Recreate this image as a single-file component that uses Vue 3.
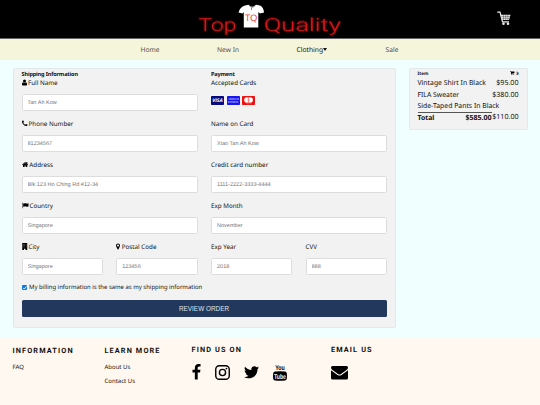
<script setup>
const icons = {
  user: { w: 1280, d: 'M1280 1399q0 109-62.500 187t-150.500 78h-854q-88 0-150.500-78t-62.500-187q0-85 8.500-160.500t31.500-152 58.500-131 94-89 134.500-34.500q131 128 313 128t313-128q76 0 134.500 34.500t94 89 58.500 131 31.500 152 8.500 160.500zm-256-887q0 159-112.500 271.500t-271.500 112.500-271.500-112.500-112.500-271.500 112.500-271.500 271.500-112.500 271.500 112.500 112.500 271.500z' },
  phone: { w: 1408, d: 'M1408 1240q0 27-10 70.500t-21 68.500q-21 50-122 106-94 51-186 51-27 0-53-3.500t-57.500-12.500-47-14.500-55.500-20.500-49-18q-98-35-175-83-127-79-264-216t-216-264q-48-77-83-175-3-9-18-49t-20.500-55.500-14.500-47-12.500-57.500-3.500-53q0-92 51-186 56-101 106-122 25-11 68.500-21t70.500-10q14 0 21 3 18 6 53 76 11 19 30 54t35 63.500 31 53.500q3 4 17.500 25t21.500 35.500 7 28.500q0 20-28.500 50t-62 55-62 53-28.500 46q0 9 5 22.500t8.500 20.500 14 24 11.500 19q76 137 174 235t235 174q2 1 19 11.500t24 14 20.500 8.500 22.500 5q18 0 46-28.500t53-62 55-62 50-28.500q14 0 28.500 7t35.500 21.500 25 17.500q25 15 53.500 31t63.500 35 54 30q70 35 76 53 3 7 3 21z' },
  house: { w: 1664, d: 'M1408 992v480q0 26-19 45t-45 19h-384v-384h-256v384h-384q-26 0-45-19t-19-45v-480l576-475zm223-69l-62 74q-8 9-21 11h-3q-13 0-21-7l-692-577-692 577q-12 8-24 7-13-2-21-11l-62-74q-8-10-7-23.500t11-21.500l719-599q32-26 76-26t76 26l244 204v-195q0-14 9-23t23-9h192q14 0 23 9t9 23v408l219 182q10 8 11 21.500t-7 23.500z' },
  flag: { w: 1792, d: 'M320 256q0 72-64 110v1266q0 13-9.500 22.500t-22.500 9.500h-64q-13 0-22.500-9.500t-9.500-22.500v-1266q-64-38-64-110 0-53 37.500-90.500t90.500-37.500 90.500 37.500 37.500 90.500zm1472 64v763q0 25-12.500 38.500t-39.500 27.500q-215 116-369 116-61 0-123.500-22t-108.500-48-115.500-48-142.500-22q-192 0-464 146-17 9-33 9-26 0-45-19t-19-45v-742q0-32 31-55 21-14 79-43 236-120 421-120 107 0 200 29t219 88q38 19 88 19 54 0 117.500-21t110-47 88-47 54.500-21q26 0 45 19t19 45z' },
  building: { w: 1408, d: 'M64 0H1344V1792H896V1500H512V1792H64ZM300 256V380H420V256ZM644 256V380H764V256ZM988 256V380H1108V256ZM300 600V724H420V600ZM644 600V724H764V600ZM988 600V724H1108V600ZM300 950V1074H420V950ZM644 950V1074H764V950ZM988 950V1074H1108V950Z' },
  pin: { w: 1024, d: 'M768 640q0-106-75-181t-181-75-181 75-75 181 75 181 181 75 181-75 75-181zm256 0q0 109-33 179l-364 774q-16 33-47.500 52t-67.500 19-67.500-19-46.500-52l-365-774q-33-70-33-179 0-212 150-362t362-150 362 150 150 362z' }
}
const rows = [
  [{ label: 'Full Name', icon: 'user', ph: 'Tan Ah Kow' }],
  [{ label: 'Phone Number', icon: 'phone', ph: '81234567' }],
  [{ label: 'Address', icon: 'house', ph: 'Blk 123 Ho Ching Rd #12-34' }],
  [{ label: 'Country', icon: 'flag', ph: 'Singapore' }],
  [{ label: 'City', icon: 'building', ph: 'Singapore' }, { label: 'Postal Code', icon: 'pin', ph: '123456' }]
]
const payRows = [
  [{ label: 'Name on Card', ph: 'Xiao Tan Ah Kow' }],
  [{ label: 'Credit card number', ph: '1111-2222-3333-4444' }],
  [{ label: 'Exp Month', ph: 'November' }],
  [{ label: 'Exp Year', ph: '2018' }, { label: 'CVV', ph: '888' }]
]
</script>

<template>
  <div class="page">
    <header class="top">
      <svg class="brand" viewBox="0 0 150 38" width="150" height="38">
        <g class="neon">
          <text x="2.500" y="30.500" textLength="38" lengthAdjust="spacingAndGlyphs">Top</text>
          <text x="68" y="30.500" textLength="77" lengthAdjust="spacingAndGlyphs">Quality</text>
        </g>
        <path class="shirt" d="M49 5.500 52.500 4.800Q56 8.500 60 4.800L64 5.500Q67.500 7 68 12.500L64 13.600 62.300 12V27.500H47.800V12L46.500 13.600 42.500 12.500Q44 7 49 5.500Z" />
        <path d="M53 5Q56 9.500 59.500 5M55.500 7.500V10" fill="none" stroke="#555" stroke-width=".7" />
        <text class="tq" x="49" y="20.600" textLength="12.500" lengthAdjust="spacingAndGlyphs">TQ</text>
      </svg>
      <svg class="cart" viewBox="0 0 14 15" width="14" height="15">
        <path d="M.3 1.200H3L5.500 10.800H12" fill="none" stroke="#eee" stroke-width="1.200" />
        <path d="M3.500 3.700H13.600L12 9H5Z" fill="#e9e9e9" />
        <path d="M4.300 5.500H13M4.700 7.300H12.500M6.500 4V9M8.700 4V9M10.900 4V9" stroke="#333" stroke-width=".4" />
        <circle cx="6.500" cy="12.700" r="1.300" fill="#eee" /><circle cx="11" cy="12.700" r="1.300" fill="#eee" />
      </svg>
    </header>
    <nav class="nav">
      <a class="home">Home</a><a class="new">New In</a><a class="clothing">Clothing<i class="caret"></i></a><a class="sale">Sale</a>
    </nav>
    <main class="main">
      <form class="card checkout">
        <div class="columns">
          <section class="col">
            <h3>Shipping Information</h3>
            <div v-for="(row, i) in rows" :key="i" class="row">
              <div v-for="f in row" :key="f.label" class="field">
                <label><svg :viewBox="`0 0 ${icons[f.icon].w} 1792`" class="ico" :class="f.icon"><path :d="icons[f.icon].d" fill-rule="evenodd" /></svg>{{ f.label }}</label>
                <input type="text" :placeholder="f.ph">
              </div>
            </div>
          </section>
          <section class="col pay">
            <h3>Payment</h3>
            <div class="accepted">
              <label>Accepted Cards</label>
              <div class="brands">
                <svg viewBox="0 0 13 9" width="13" height="9"><rect width="13" height="9" rx=".8" fill="#0a0a80" /><text x="1.200" y="6.400" textLength="10.600" lengthAdjust="spacingAndGlyphs" class="visa">VISA</text></svg>
                <svg viewBox="0 0 13 9" width="13" height="9"><rect width="13" height="9" rx=".8" fill="#1a16ef" /><g class="amex"><text x="1.500" y="4.400" textLength="10.500" lengthAdjust="spacingAndGlyphs">AMERICAN</text><text x=".8" y="7.300" textLength="10.500" lengthAdjust="spacingAndGlyphs">EXPRESS</text></g></svg>
                <svg viewBox="0 0 13 9" width="13" height="9"><rect width="13" height="9" rx=".8" fill="#ee1111" /><circle cx="4.900" cy="4" r="2.700" fill="#fff" /><circle cx="8.200" cy="4" r="2.700" fill="#fff" /><path d="M6.550 1.900Q8.200 4 6.550 6.100 4.900 4 6.550 1.900Z" fill="#f99" stroke="#e33" stroke-width=".3" /><path d="M4 7.700H9.500" stroke="#f77" stroke-width=".5" /></svg>
              </div>
            </div>
            <div v-for="(row, i) in payRows" :key="i" class="row">
              <div v-for="f in row" :key="f.label" class="field">
                <label>{{ f.label }}</label>
                <input type="text" :placeholder="f.ph">
              </div>
            </div>
          </section>
        </div>
        <label class="same"><span class="check"><svg viewBox="0 0 6 6"><path d="M1.200 3.100 2.500 4.400 4.900 1.500" fill="none" stroke="#fff" stroke-width="1" /></svg></span>My billing information is the same as my shipping information</label>
        <button type="button">REVIEW ORDER</button>
      </form>
      <aside class="card basket">
        <div class="head"><b>Item</b><b><svg viewBox="0 0 12 11"><path d="M0 0H2.600L3 1.500H12V6.500L4.300 7.300V8H11V9H3L2 1.200H0Z" /><circle cx="4" cy="10" r="1" /><circle cx="10" cy="10" r="1" /></svg>3</b></div>
        <div class="line"><span>Vintage Shirt In Black</span><span class="price">$95.00</span></div>
        <div class="line"><span>FILA Sweater</span><span class="price">$380.00</span></div>
        <div class="line"><span>Side-Taped Pants In Black</span></div>
        <div class="totals"><p><b>Total</b><b class="sum">$585.00</b></p><span class="price">$110.00</span></div>
      </aside>
    </main>
    <footer class="foot">
      <section class="info"><h4>INFORMATION</h4><a>FAQ</a></section>
      <section class="learn"><h4>LEARN MORE</h4><a>About Us</a><a>Contact Us</a></section>
      <section class="find">
        <h4>FIND US ON</h4>
        <div class="social">
          <svg class="fb" viewBox="95 0 864 1664"><path d="M959 12v264h-157q-86 0-116 36t-30 108v189h293l-39 296h-254v759h-306v-759h-255v-296h255v-218q0-186 104-288.500t277-102.500q147 0 228 12z" /></svg>
          <svg class="ig" viewBox="0 0 16 16"><rect x=".8" y=".8" width="14.400" height="14.400" rx="3.800" fill="none" stroke="#000" stroke-width="1.500" /><circle cx="8" cy="8" r="3.300" fill="none" stroke="#000" stroke-width="1.500" /><circle cx="12.200" cy="3.800" r="1" /></svg>
          <svg class="tw" viewBox="44 256 1576 1280"><path d="M1620 408q-67 98-162 167 1 14 1 42 0 130-38 259.500t-115.500 248.500-184.500 210.500-258 146-323 54.500q-271 0-496-145 35 4 78 4 225 0 401-138-105-2-188-64.500t-114-159.500q33 5 61 5 43 0 85-11-112-23-185.500-111.500t-73.500-205.500v-4q68 38 146 41-66-44-105-115t-39-154q0-88 44-163 121 149 294.500 238.500t371.500 99.500q-8-38-8-74 0-134 94.500-228.500t228.500-94.500q140 0 236 102 109-21 205-78-37 115-142 178 93-10 186-50z" /></svg>
          <svg class="yt" viewBox="0 0 14 17"><path d="M2 7.600Q7 7.100 12 7.600 13.500 7.800 13.800 9.500 14.200 12 13.800 14.700 13.500 16.200 12 16.500 7 17 2 16.500.5 16.200.2 14.700-.2 12 .2 9.500.5 7.800 2 7.600Z" /><text x="2.200" y="6.100" textLength="9.600" lengthAdjust="spacingAndGlyphs">You</text><text x="1" y="14.900" textLength="12" lengthAdjust="spacingAndGlyphs" fill="#fff8f0">Tube</text></svg>
        </div>
      </section>
      <section class="mail">
        <h4>EMAIL US</h4>
        <svg viewBox="0 0 17 14"><path d="M1.500 0H15.500Q17 0 17 1.500 17 3 15.200 4.300L10 8Q8.500 9 7 8L1.800 4.300Q0 3 0 1.500 0 0 1.500 0ZM0 4.300 6.500 8.900Q8.500 10.200 10.500 8.900L17 4.300V12Q17 13.500 15.500 13.500H1.500Q0 13.500 0 12Z" /></svg>
      </section>
    </footer>
  </div>
</template>

<style>
body { margin: 0; background: #fff8f0; overflow: hidden; }
</style>

<style scoped>
* { box-sizing: border-box; }
svg { overflow: visible; flex: none; }
.page { width: 540px; height: 405px; background: #f0ffff; font: 6.7px/9px "Noto Sans", "Open Sans", sans-serif; color: #111; display: flex; flex-direction: column; text-rendering: geometricPrecision; }
h3, h4, p { margin: 0; }
.top { height: 38.500px; background: #000; display: flex; flex: none; align-items: flex-start; padding-left: 196px; border-bottom: .5px solid #666; }
.neon text { font: 300 18px Roboto, sans-serif; fill: #d81a1e; }
.neon { filter: drop-shadow(0 0 1px #c00); }
.shirt { fill: #fff; }
.tq { font: 9px "Noto Sans", sans-serif; fill: #e44; }
.cart { margin: 11px 0 0 151px; }
.nav { height: 21.500px; flex: none; background: #f5f5dc; display: flex; align-items: center; padding-left: 140.500px; color: #574c3c; }
.nav a { white-space: nowrap; line-height: 9px; }
.home { width: 76.500px; } .new { width: 79.500px; } .clothing { width: 89px; color: #111; }
.caret { display: inline-block; border: 2.300px solid transparent; border-top: 3px solid #111; border-bottom: 0; vertical-align: .4px; }
.main { height: 276.500px; flex: none; padding: 8px 12.500px 0; display: flex; gap: 13px; align-items: flex-start; }
.card { background: #f2f2f2; border: 1px solid #e3e8e8; border-radius: 1.500px; }
.checkout { width: 383px; height: 260px; padding: 1px 8px 0; }
.columns { display: grid; grid-template-columns: 176px 175.500px; gap: 13.500px; }
h3 { font-size: 5.600px; line-height: 8px; font-weight: 700; letter-spacing: -.17px; white-space: nowrap; }
.row { display: flex; gap: 13.500px; height: 41px; }
.field { flex: 1; min-width: 0; }
label { display: flex; align-items: center; height: 9px; white-space: nowrap; font-size: 6.250px; }
.ico { height: 7px; margin-right: 1.500px; }
.user { width: 5px; } .phone { width: 5.500px; } .house { width: 6.300px; } .flag { width: 6.500px; } .building { width: 5.500px; } .pin { width: 4px; }
input { display: block; width: 100%; height: 17px; margin: 7px 0 0; padding: 0 5px; border: 1px solid #ddd; border-radius: 1.500px; background: #fff; font: 5.550px "Liberation Sans", sans-serif; text-rendering: geometricPrecision; }
input::placeholder { color: #777; opacity: 1; }
.accepted { height: 41px; }
.brands { display: flex; gap: 2.700px; margin-top: 9px; }
.visa { font: italic bold 5px "Open Sans", sans-serif; fill: #fff; }
.amex text { font: bold 3px "Liberation Sans", sans-serif; fill: #aeb8ff; }
.same { height: 9px; font-size: 5.950px; }
.check { width: 5.500px; height: 5.500px; background: #0b76e8; border-radius: 1px; margin-right: 2px; display: flex; }
.check svg { width: 100%; height: 100%; }
button { display: block; width: 100%; height: 17px; margin-top: 8px; padding: 0; border: 0; border-radius: 1.500px; background: #22395d; color: #dfe4ec; font: 6.400px "Liberation Sans", sans-serif; }
.basket { width: 119px; height: 61.500px; padding: 1px 8px 0; }
.head { display: flex; justify-content: space-between; font-size: 4.500px; line-height: 8px; height: 8px; }
.head svg { width: 4.500px; height: 4px; margin-right: 1.500px; }
.line, .totals { display: flex; align-items: center; justify-content: space-between; height: 11.400px; line-height: 11px; font-size: 6.850px; white-space: nowrap; }
.price { font-size: 7.100px; }
.totals p { display: flex; flex: none; justify-content: space-between; width: 74px; border-top: .7px solid #555; }
.sum { font-size: 7.100px; letter-spacing: -.05px; }
.foot { flex: 1; background: #fff8f0; padding: 9.500px 12.500px 0; display: flex; }
h4 { font: bold 7.300px/9px Roboto, sans-serif; letter-spacing: 1.130px; white-space: nowrap; }
.foot a { display: block; font-size: 6px; line-height: 9px; margin-bottom: 4.500px; }
.info { width: 92px; }
.learn { width: 87px; }
.info h4, .learn h4 { margin-bottom: 8px; }
.find, .mail { margin-top: -1px; }
.find { width: 139.500px; }
.social { display: flex; align-items: flex-start; margin-top: 10px; }
.fb { width: 9px; height: 15.500px; margin-right: 14px; }
.ig { width: 15px; height: 15px; margin: 1px 14px 0 0; }
.tw { width: 15px; height: 12.500px; margin: 2px 14px 0 0; }
.yt { width: 14px; height: 17px; }
.yt text { font: bold 7px "Liberation Sans", sans-serif; }
.mail svg { display: block; width: 17px; height: 14px; margin-top: 12px; }
</style>
